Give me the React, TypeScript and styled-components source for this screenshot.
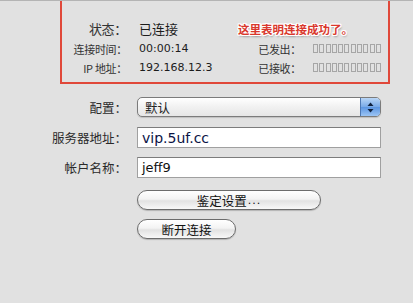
import styled, { createGlobalStyle } from 'styled-components'

const GlobalStyle = createGlobalStyle`
  html, body {
    margin: 0;
    padding: 0;
    background: #e1e1e1;
  }
  body {
    font-family: 'DejaVu Sans', 'Noto Sans CJK SC', sans-serif;
    color: #222;
  }
`

const cjk = `'Noto Sans CJK SC', 'DejaVu Sans', sans-serif`
const latin = `'DejaVu Sans', 'Noto Sans CJK SC', sans-serif`

export default function App() {
  return (
    <>
      <GlobalStyle />
      <Page>
        <StatusBox>
          <StatusGrid>
            <Label $size={13}>状态：</Label>
            <Value $size={13} $cjk>已连接</Value>
            <Note>这里表明连接成功了。</Note>
            <Label>连接时间：</Label>
            <Value>00:00:14</Value>
            <Label>已发出：</Label>
            <Gauge>
              {Array.from({ length: 11 }).map((_, i) => (
                <Cell key={i} />
              ))}
            </Gauge>
            <Label>IP 地址：</Label>
            <Value>192.168.12.3</Value>
            <Label>已接收：</Label>
            <Gauge>
              {Array.from({ length: 11 }).map((_, i) => (
                <Cell key={i} />
              ))}
            </Gauge>
          </StatusGrid>
        </StatusBox>

        <Form>
          <FormLabel>配置：</FormLabel>
          <Select>
            <span>默认</span>
            <Stepper>
              <svg width="7" height="11" viewBox="0 0 7 11">
                <path d="M3.5 0.5 L6.5 4 L0.5 4 Z" fill="#10223f" />
                <path d="M3.5 10.5 L6.5 7 L0.5 7 Z" fill="#10223f" />
              </svg>
            </Stepper>
          </Select>

          <FormLabel>服务器地址：</FormLabel>
          <Input $big>vip.5uf.cc</Input>

          <FormLabel>帐户名称：</FormLabel>
          <Input>jeff9</Input>

          <span />
          <PillButton $width={184} $gapTop={12}>
            鉴定设置<Dots>...</Dots>
          </PillButton>

          <span />
          <PillButton $width={99} $gapTop={9}>断开连接</PillButton>
        </Form>
      </Page>
    </>
  )
}

const Page = styled.div`
  width: 413px;
  height: 303px;
  border-top: 1px solid #b4b4b4;
  box-sizing: border-box;
  overflow: hidden;
`

const StatusBox = styled.section`
  margin-left: 60px;
  width: 330px;
  height: 83px;
  box-sizing: border-box;
  border: 2px solid #e0483a;
  border-top: none;
  padding-top: 17px;
`

const StatusGrid = styled.div`
  display: grid;
  grid-template-columns: 61px 81px 61px 1fr;
  grid-template-rows: 21px 19px 19px;
  column-gap: 16px;
  align-items: center;
`

const Label = styled.div<{ $size?: number }>`
  font-family: ${cjk};
  font-size: ${(p) => p.$size ?? 11}px;
  color: #333;
  text-align: right;
  white-space: nowrap;
  letter-spacing: -0.3px;
  line-height: 20px;
  justify-self: end;
  margin-right: -4px;
`

const Value = styled.div<{ $size?: number; $cjk?: boolean }>`
  font-family: ${(p) => (p.$cjk ? cjk : latin)};
  font-size: ${(p) => p.$size ?? 11}px;
  color: #1c1c1c;
  white-space: nowrap;
  line-height: 20px;
`

const Note = styled.div`
  grid-column: 3 / span 2;
  margin-left: 2px;
  font-family: ${cjk};
  font-size: 11.5px;
  font-weight: 700;
  color: #d9382d;
  white-space: nowrap;
  line-height: 20px;
  text-shadow:
    1px 0 0 #fff, -1px 0 0 #fff, 0 1px 0 #fff, 0 -1px 0 #fff,
    1px 1px 0 #fff, -1px -1px 0 #fff, 1px -1px 0 #fff, -1px 1px 0 #fff,
    1px 2px 2px rgba(0, 0, 0, 0.35);
`

const Gauge = styled.div`
  display: flex;
  gap: 1.3px;
`

const Cell = styled.span`
  width: 5px;
  height: 9px;
  border: 1px solid #a6a6a6;
  box-sizing: border-box;
`

const Form = styled.div`
  display: grid;
  grid-template-columns: 123px 244px;
  column-gap: 14px;
  row-gap: 9px;
  align-items: center;
  margin-top: 13px;
`

const FormLabel = styled.div`
  font-family: ${cjk};
  font-size: 12.5px;
  color: #2a2a2a;
  text-align: right;
  white-space: nowrap;
  margin-right: -4px;
`

const Select = styled.div`
  height: 20px;
  box-sizing: border-box;
  border: 1px solid #7b7b7b;
  border-radius: 5px;
  background: linear-gradient(#ffffff, #f1f1f1 50%, #e6e6e6);
  display: flex;
  align-items: center;
  justify-content: space-between;
  padding-left: 7px;
  overflow: hidden;
  font-family: ${cjk};
  font-size: 12.5px;
  color: #222;
  box-shadow: 0 1px 1px rgba(0, 0, 0, 0.15);
`

const Stepper = styled.div`
  width: 19px;
  height: 100%;
  border-left: 1px solid #4d78b4;
  background: linear-gradient(#b9d6f6, #77a9e8 50%, #5b95e2 51%, #9cc5f4);
  display: flex;
  align-items: center;
  justify-content: center;
`

const Input = styled.div<{ $big?: boolean }>`
  height: 21px;
  box-sizing: border-box;
  background: #fff;
  border: 1px solid #a0a0a0;
  border-top-color: #7c7c7c;
  padding-left: 4px;
  display: flex;
  align-items: center;
  font-family: ${latin};
  font-size: ${(p) => (p.$big ? 14 : 13)}px;
  color: ${(p) => (p.$big ? '#0b1446' : '#111')};
  margin-top: ${(p) => (p.$big ? 1 : 0)}px;
`

const PillButton = styled.div<{ $width: number; $gapTop: number }>`
  width: ${(p) => p.$width}px;
  height: 20px;
  box-sizing: border-box;
  margin-top: ${(p) => p.$gapTop - 9}px;
  border: 1px solid #6c6c6c;
  border-radius: 10px;
  background: linear-gradient(#ffffff, #f3f3f3 45%, #e2e2e2 55%, #f8f8f8);
  box-shadow: 0 1px 1px rgba(0, 0, 0, 0.2);
  display: flex;
  align-items: center;
  justify-content: center;
  font-family: ${cjk};
  font-size: 12.5px;
  color: #111;
  white-space: nowrap;
`

const Dots = styled.span`
  font-family: ${latin};
  font-size: 11px;
  letter-spacing: 1px;
  margin-left: 1px;
`
